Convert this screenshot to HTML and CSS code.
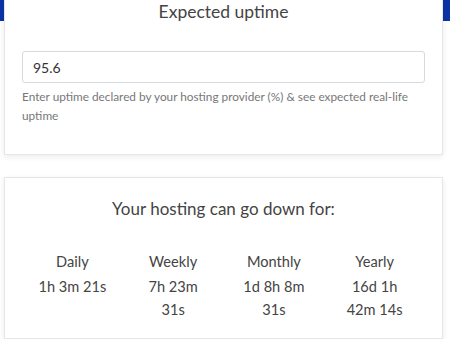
FILE: index.html
```html
<!DOCTYPE html>
<html lang="en">
<head>
  <meta charset="UTF-8" />
  <meta name="viewport" content="width=device-width, initial-scale=1.0"/>
  <title>Uptime calculator</title>
  <link rel="stylesheet" href="styles.css">
</head>
<body>

<div class="card card-input">
  <h2>Expected uptime</h2>
  <input type="text" class="uptime" value="95.6" />
  <p class="help">Enter uptime declared by your hosting provider (%) &amp; see expected real-life uptime</p>
</div>

<div class="card card-result">
  <h2>Your hosting can go down for:</h2>
  <div class="periods">
    <div class="period">
      <div class="label">Daily</div>
      <div class="value">1h 3m 21s</div>
    </div>
    <div class="period">
      <div class="label">Weekly</div>
      <div class="value">7h 23m 31s</div>
    </div>
    <div class="period">
      <div class="label">Monthly</div>
      <div class="value">1d 8h 8m 31s</div>
    </div>
    <div class="period">
      <div class="label">Yearly</div>
      <div class="value">16d 1h 42m 14s</div>
    </div>
  </div>
</div>

</body>
</html>
```

FILE: styles.css
```css
body {
  margin: 0;
  font-family: Lato, "Open Sans", sans-serif;
  color: #444;
  background: linear-gradient(#0b33a6 0 21px, #fff 21px) no-repeat;
}

.card {
  background-color: white;
  width: 439px;
  margin-left: 4px;
  box-sizing: border-box;
  border: 1px solid #e6e6e6;
  box-shadow: 0 2px 6px rgba(0,0,0,0.08);
  padding: 0 17px;
}

h2 {
  text-align: center;
  font-weight: normal;
  font-size: 17.5px;
  line-height: 24px;
  margin: 0;
  color: #444;
}

.card-input {
  border-top: none;
  padding-bottom: 29px;
}

.card-input h2 {
  margin-bottom: 27px;
}

.uptime {
  display: block;
  width: 100%;
  height: 32px;
  box-sizing: border-box;
  padding: 0 10px;
  border: 1px solid #d6dae0;
  border-radius: 3px;
  font-family: inherit;
  font-size: 14px;
  color: #333;
}

.help {
  margin: 4px 0 0;
  font-size: 11.8px;
  line-height: 19px;
  color: #777;
}

.card-result {
  margin-top: 22px;
  padding-top: 19px;
  padding-bottom: 17px;
}

.card-result h2 {
  font-size: 17px;
  margin-bottom: 29px;
}

.periods {
  display: grid;
  grid-template-columns: repeat(4, 1fr);
  text-align: center;
  font-size: 14.6px;
  line-height: 23px;
  color: #444;
}

.period {
  padding: 0 15px;
}

.label {
  margin-bottom: 2px;
}
```
